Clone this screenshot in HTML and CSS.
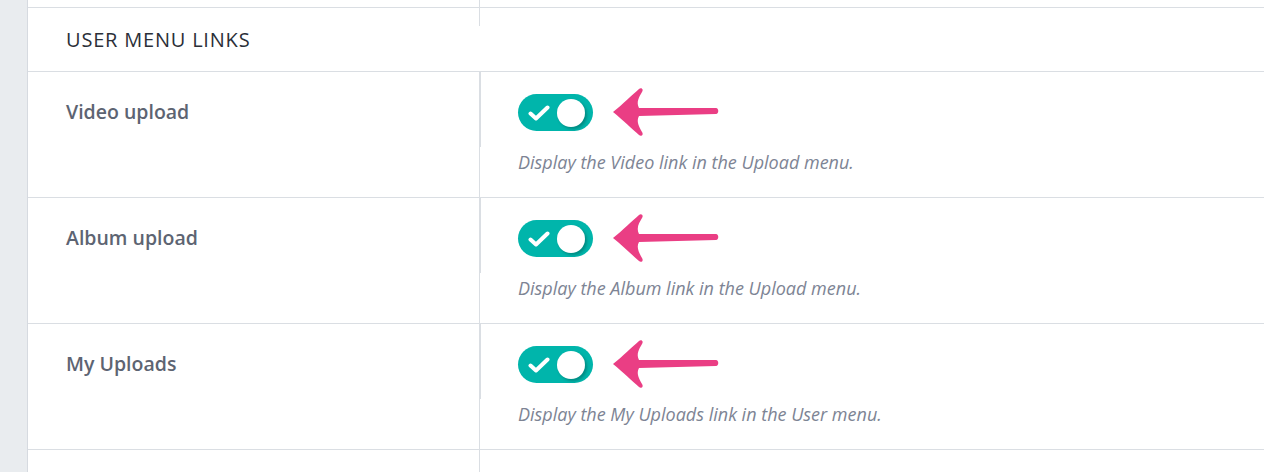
FILE: index.html
```html
<!DOCTYPE html>
<html lang="en">
<head>
    <meta charset="UTF-8">
    <title>User menu links</title>
    <link rel="stylesheet" href="styles.css">
</head>
<body>
    <div class="sidebar"></div>
    <div class="main">
        <div class="row row-top">
            <div class="cell-label"></div>
            <div class="cell-control"></div>
        </div>
        <div class="section-title">USER MENU LINKS</div>

        <div class="row">
            <div class="cell-label">Video upload</div>
            <div class="cell-control">
                <div class="control-line">
                    <span class="toggle">
                        <svg class="check" width="22" height="16" viewBox="0 0 22 16"><path d="M2.5 8.5 L8 13.5 L19.5 2.5" fill="none" stroke="#fff" stroke-width="4" stroke-linecap="round" stroke-linejoin="round"/></svg>
                        <span class="knob"></span>
                    </span>
                    <svg class="arrow" width="108" height="50" viewBox="0 0 108 50"><path d="M2 25 C12 17 21 8 28 2 C30 0 33 2 31 5 C28 10 25 15 28 21 L105 21 C108 21 108 27 105 27 L28 29 C25 34 28 40 31 45 C33 48 30 50 28 48 C21 42 12 33 2 25 Z"/></svg>
                </div>
                <p class="hint">Display the Video link in the Upload menu.</p>
            </div>
        </div>

        <div class="row">
            <div class="cell-label">Album upload</div>
            <div class="cell-control">
                <div class="control-line">
                    <span class="toggle">
                        <svg class="check" width="22" height="16" viewBox="0 0 22 16"><path d="M2.5 8.5 L8 13.5 L19.5 2.5" fill="none" stroke="#fff" stroke-width="4" stroke-linecap="round" stroke-linejoin="round"/></svg>
                        <span class="knob"></span>
                    </span>
                    <svg class="arrow" width="108" height="50" viewBox="0 0 108 50"><path d="M2 25 C12 17 21 8 28 2 C30 0 33 2 31 5 C28 10 25 15 28 21 L105 21 C108 21 108 27 105 27 L28 29 C25 34 28 40 31 45 C33 48 30 50 28 48 C21 42 12 33 2 25 Z"/></svg>
                </div>
                <p class="hint">Display the Album link in the Upload menu.</p>
            </div>
        </div>

        <div class="row">
            <div class="cell-label">My Uploads</div>
            <div class="cell-control">
                <div class="control-line">
                    <span class="toggle">
                        <svg class="check" width="22" height="16" viewBox="0 0 22 16"><path d="M2.5 8.5 L8 13.5 L19.5 2.5" fill="none" stroke="#fff" stroke-width="4" stroke-linecap="round" stroke-linejoin="round"/></svg>
                        <span class="knob"></span>
                    </span>
                    <svg class="arrow" width="108" height="50" viewBox="0 0 108 50"><path d="M2 25 C12 17 21 8 28 2 C30 0 33 2 31 5 C28 10 25 15 28 21 L105 21 C108 21 108 27 105 27 L28 29 C25 34 28 40 31 45 C33 48 30 50 28 48 C21 42 12 33 2 25 Z"/></svg>
                </div>
                <p class="hint">Display the My Uploads link in the User menu.</p>
            </div>
        </div>

        <div class="row row-bottom">
            <div class="cell-label"></div>
            <div class="cell-control"></div>
        </div>
    </div>
</body>
</html>
```

FILE: styles.css
```css
body {
    margin: 0;
    display: flex;
    min-height: 472px;
    background: #fff;
    font-family: "Open Sans", "Noto Sans", sans-serif;
    overflow: hidden;
}

.sidebar {
    width: 27px;
    flex-shrink: 0;
    background: #e9ecef;
    border-right: 1px solid #d6dae0;
}

.main {
    flex: 1;
}

.row {
    display: grid;
    grid-template-columns: 452px 1fr;
    height: 125px;
    border-bottom: 1px solid #dadee3;
}

.row-top {
    height: 7px;
}

.row-bottom {
    height: 30px;
    border-bottom: none;
}

.cell-label {
    border-right: 1px solid #dadee3;
    padding: 26px 0 0 38px;
    font-size: 19.5px;
    line-height: 28px;
    font-weight: 600;
    color: #5d6472;
}

.section-title {
    height: 63px;
    line-height: 64px;
    padding-left: 38px;
    border-bottom: 1px solid #dadee3;
    font-size: 20px;
    color: #2b2f38;
    letter-spacing: 0.8px;
}

.control-line {
    display: flex;
    align-items: center;
    gap: 18px;
    height: 37px;
    padding: 22px 0 16px 37px;
    border-left: 1px solid #dadee3;
}

.toggle {
    display: flex;
    align-items: center;
    justify-content: space-between;
    box-sizing: border-box;
    width: 75px;
    height: 37px;
    padding: 0 8px 0 10px;
    border-radius: 19px;
    background: #00b5ab;
}

.knob {
    width: 28px;
    height: 28px;
    border-radius: 50%;
    background: #fff;
    box-shadow: 2px 2px 3px rgba(0, 60, 55, 0.35);
}

.arrow {
    fill: #ea3e84;
    margin-top: -1px;
}

.hint {
    margin: 3px 0 0 38px;
    font-size: 18px;
    line-height: 24px;
    font-style: italic;
    color: #7d8494;
}
```
